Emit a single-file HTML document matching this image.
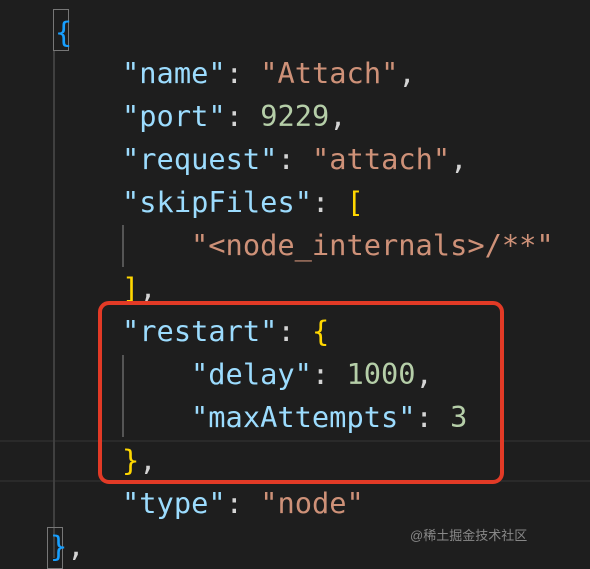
<!DOCTYPE html>
<html><head><style>
body{margin:0;width:590px;height:558px;background:#1e1e1e;overflow:hidden;position:relative;font-family:"DejaVu Sans Mono","Liberation Mono",monospace;}
.l{position:absolute;left:0;height:43px;line-height:43px;font-size:28.7px;white-space:pre;color:#d4d4d4;}
.k{color:#9cdcfe}.s{color:#ce9178}.n{color:#b5cea8}.y{color:#ffd700}.b{color:#179fff}
.g{position:absolute;background:#404040;width:2px}
</style></head><body>
<div style="position:absolute;left:0;right:0;top:440px;height:2px;background:#2a2a2a"></div>
<div style="position:absolute;left:0;right:0;top:480px;height:2px;background:#2a2a2a"></div>
<div class="g" style="left:53px;top:50px;height:508px"></div>
<div class="g" style="left:122px;top:225px;height:42px;background:#555"></div>
<div class="g" style="left:122px;top:355px;height:82px;background:#555"></div>
<div style="position:absolute;left:53px;top:9px;width:14px;height:40px;border:1px solid #777"></div>
<div style="position:absolute;left:47px;top:527px;width:14px;height:40px;border:1px solid #777"></div>
<div class="l" style="top:11px;left:55px"><span class="b">{</span></div>
<div class="l" style="top:52px;left:122px"><span class="k">"name"</span>: <span class="s">"Attach"</span>,</div>
<div class="l" style="top:95px;left:122px"><span class="k">"port"</span>: <span class="n">9229</span>,</div>
<div class="l" style="top:138px;left:122px"><span class="k">"request"</span>: <span class="s">"attach"</span>,</div>
<div class="l" style="top:181px;left:122px"><span class="k">"skipFiles"</span>: <span class="y">[</span></div>
<div class="l" style="top:224px;left:191px"><span class="s">"&lt;node_internals&gt;/**"</span></div>
<div class="l" style="top:267px;left:122px"><span class="y">]</span>,</div>
<div class="l" style="top:310px;left:122px"><span class="k">"restart"</span>: <span class="y">{</span></div>
<div class="l" style="top:353px;left:191px"><span class="k">"delay"</span>: <span class="n">1000</span>,</div>
<div class="l" style="top:396px;left:191px"><span class="k">"maxAttempts"</span>: <span class="n">3</span></div>
<div class="l" style="top:439px;left:122px"><span class="y">}</span>,</div>
<div class="l" style="top:482px;left:122px"><span class="k">"type"</span>: <span class="s">"node"</span></div>
<div class="l" style="top:525px;left:50px"><span class="b">}</span>,</div>
<div style="position:absolute;left:98px;top:301px;width:398px;height:175px;border:4px solid #e23a26;border-radius:11px"></div>
<div style="position:absolute;left:410px;top:525px;font-size:13px;color:#888;font-family:'Liberation Sans','Noto Sans CJK SC',sans-serif">@稀土掘金技术社区</div>
</body></html>
